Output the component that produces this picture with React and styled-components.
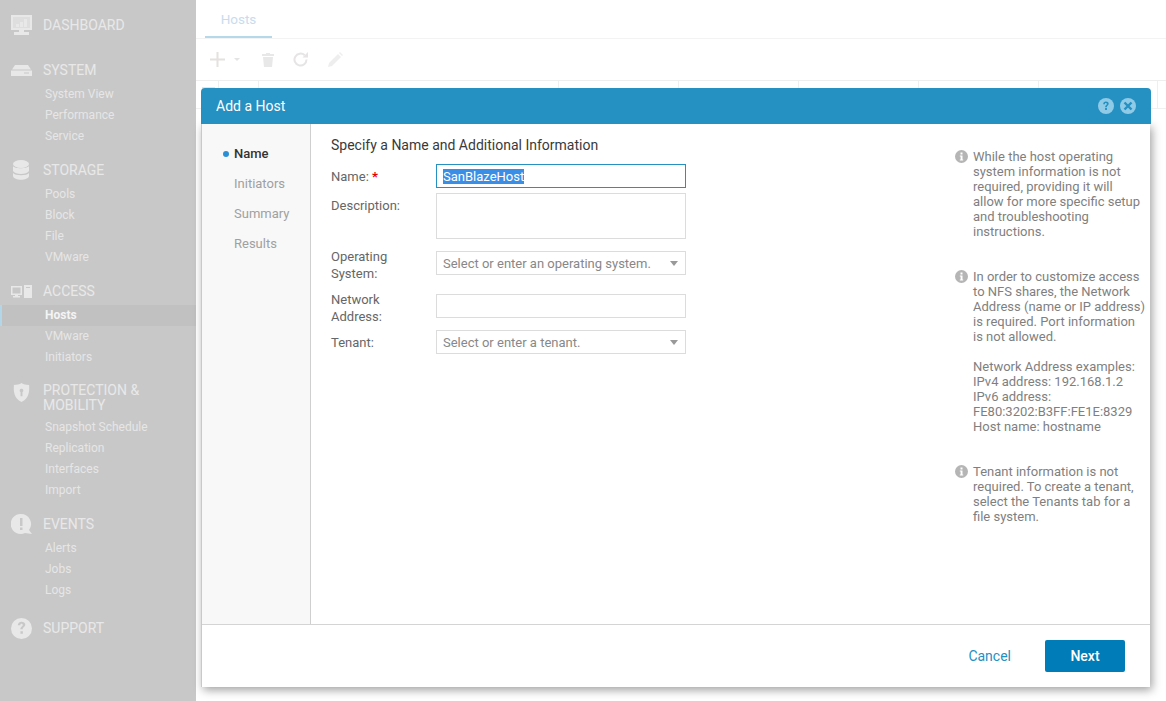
import React from 'react';
import styled, { createGlobalStyle } from 'styled-components';

const Global = createGlobalStyle`
  html, body { margin: 0; padding: 0; height: 100%; background: #fff; overflow: hidden; }
  body { font-family: Roboto, "Liberation Sans", sans-serif; }
`;
const Page = styled.div`display: flex; width: 1166px; height: 701px; position: relative; overflow: hidden;`;
const Sidebar = styled.nav`width: 196px; height: 701px; flex: none; background: #c8c8c8; padding-top: 17px; box-sizing: border-box;`;
const Section = styled.section`margin-bottom: ${p => p.$gap}px;`;
const SectionHead = styled.div`
  display: flex; align-items: ${p => p.$top ? 'flex-start' : 'center'}; height: ${p => p.$h || 16}px;
  margin-bottom: ${p => p.$mb ?? 6}px;
  color: #e8e8e8; font-size: 14px; line-height: 15px; text-transform: uppercase;
`;
const IconSlot = styled.span`width: 43px; padding-left: 11px; box-sizing: border-box; flex: none; display: flex; align-items: center; height: 22px; margin-top: ${p => p.$mt || 0}px;`;
const SubItem = styled.div`
  height: 21px; line-height: 21px; padding-left: ${p => p.$active ? 43 : 45}px; font-size: 12px;
  color: ${p => p.$active ? '#f4f4f4' : '#e6e6e6'}; font-weight: ${p => p.$active ? 700 : 400};
  ${p => p.$active && 'background:#c1c1c1;border-left:2px solid #b3d7e8;'}
`;
const Main = styled.main`flex: 1; min-width: 0;`;
const TabBar = styled.div`height: 38px; padding-left: 9px; border-bottom: 1px solid #f3f3f3;`;
const Tab = styled.div`width: 67px; height: 38px; box-sizing: border-box; text-align: center; line-height: 39px; font-size: 13.5px; color: #c9dcee; border-bottom: 2px solid #b5d8ea;`;
const Toolbar = styled.div`height: 41px; display: flex; align-items: center; padding-left: 14px; border-bottom: 1px solid #eeeeee;`;
const ToolIcon = styled.span`display: flex; margin-left: ${p => p.$ml || 0}px;`;
const HeadRow = styled.div`display: grid; grid-template-columns: 23px 40px 300px 120px 120px 120px 120px 119px 1fr; height: 27px; border-bottom: 1px solid #f0f0f0;`;
const HeadCell = styled.div`border-right: 1px solid #efefef; padding: 6px 0 0 6px;`;
const CheckBox = styled.span`display: block; width: 11px; height: 11px; border: 1px solid #e4e4e4;`;

const Modal = styled.div`
  position: absolute; left: 201px; top: 88px; width: 950px; height: 599px; display: flex; flex-direction: column;
`;
const ModalHead = styled.header`height: 36px; flex: none; background: #2590c2; border-radius: 4px 4px 0 0; display: flex; align-items: center; justify-content: space-between; padding: 0 15px; color: #fff; font-size: 14px; position: relative; z-index: 1;`;
const HeadIcons = styled.div`display: flex; gap: 6px;`;
const Panel = styled.div`flex: 1; min-height: 0; margin-right: 1px; border-left: 1px solid #c9c9c9; background: #fff; display: flex; flex-direction: column; box-shadow: 2px 3px 9px rgba(0,0,0,.38);`;
const Body = styled.div`flex: 1; display: flex; min-height: 0;`;
const Steps = styled.ul`width: 109px; flex: none; margin: 0; padding: 15px 0 0 32px; box-sizing: border-box; background: #f8f8f8; border-right: 1px solid #cfcfcf; list-style: none;`;
const Step = styled.li`
  height: 30px; line-height: 30px; font-size: 13px; position: relative;
  color: ${p => p.$on ? '#333' : '#a0a0a0'}; font-weight: ${p => p.$on ? 500 : 400};
  ${p => p.$on && `&::before{content:"";position:absolute;left:-11px;top:12px;width:6px;height:6px;border-radius:50%;background:#2b8fd6;}`}
`;
const Content = styled.div`flex: 1; padding: 12px 0 0 20px; min-width: 0; display: flex;`;
const FormCol = styled.div`width: 355px; flex: none;`;
const Title = styled.h2`margin: 0 0 10px; font-size: 14px; line-height: 18px; font-weight: 400; color: #3a3a3a;`;
const Row = styled.div`display: flex; margin-bottom: ${p => p.$mb ?? 5}px;`;
const Label = styled.label`width: 105px; flex: none; font-size: 13px; line-height: 17px; color: #666; padding-top: ${p => p.$pt ?? 4}px;`;
const Star = styled.span`color: #e60000; font-weight: 700;`;
const Field = styled.div`
  width: 250px; height: ${p => p.$h || 24}px; box-sizing: border-box; border: 1px solid ${p => p.$focus ? '#2590c2' : '#dcdcdc'};
  margin-top: ${p => p.$mt || 0}px;
  display: flex; align-items: center; justify-content: space-between; padding: 0 7px 0 6px; font-size: 13px; color: #888; background: #fff;
`;
const Selected = styled.span`background: #3a8ee6; color: #fff; line-height: 15px;`;
const Caret = styled.span`width: 0; height: 0; border-left: 4.500px solid transparent; border-right: 4.500px solid transparent; border-top: 5px solid #999;`;
const HelpCol = styled.aside`margin-left: 269px; width: 195px; padding-top: 13px; box-sizing: border-box;`;
const HelpBlock = styled.div`display: flex; margin-bottom: ${p => p.$mb}px;`;
const HelpIcon = styled.span`width: 18px; flex: none; padding-top: 1px; display: flex; align-items: flex-start;`;
const HelpText = styled.p`margin: 0; font-size: 13px; line-height: 15px; color: #7f7f7f; white-space: nowrap;`;
const Footer = styled.footer`height: 63px; flex: none; box-sizing: border-box; border-top: 1px solid #d4d4d4; display: flex; align-items: center; justify-content: flex-end; padding: 0 25px 0 0;`;
const Cancel = styled.a`font-size: 14px; color: #2590c2; margin-right: 34px;`;
const NextBtn = styled.button`width: 80px; height: 32px; border: 0; border-radius: 2px; background: #007db8; color: #fff; font: 500 14px Roboto, sans-serif; padding: 0;`;

const c = '#e8e8e8';
const Dash = () => <svg width="21" height="20" viewBox="0 0 21 20"><path fill={c} fillRule="evenodd" d="M0 0h21v15H13v2h5v3H3v-3h5v-2H0zM2 2v11h17V2z"/><path fill="#dedede" d="M2 2h17v11H2z"/><path fill={c} d="M5 9h3v3H5zM9 7h3v5H9zM13 4h3v8h-3z"/></svg>;
const Sys = () => <svg width="21" height="11" viewBox="0 0 21 11"><path fill={c} fillRule="evenodd" d="M4 0h13l3 4.500H1zM0 5.500h21V11H0zM13 7.500v1h5v-1z"/></svg>;
const Stor = () => <svg width="16" height="20" viewBox="0 0 16 20" style={{ marginLeft: 2 }}><ellipse cx="8" cy="4" rx="8" ry="4" fill={c}/><path fill={c} d="M0 6c1 3 14 3 16 0v5c-2 4-14 4-16 0zM0 13c2 3 14 3 16 0v3c-1 5-15 5-16 0z"/></svg>;
const Acc = () => <svg width="21" height="13" viewBox="0 0 21 13"><path fill={c} fillRule="evenodd" d="M0 1h11v9H7v1h2v1.500H2V11h2v-1H0zM1.500 2.500v6h8v-6z"/><path fill={c} fillRule="evenodd" d="M13 0h8v13h-8zM15 2v1h4V2z"/></svg>;
const Shield = () => <svg width="17" height="19" viewBox="0 0 17 20" style={{ marginLeft: 2 }}><path fill={c} fillRule="evenodd" d="M8.500 0c2 1.500 5 2 8 2 .5 7 0 14-8 18C.5 16 0 9 .5 2c3 0 6-.5 8-2zM8.500 6a2 2 0 0 0-1 3.700V14h2V9.700a2 2 0 0 0-1-3.700z"/></svg>;
const Evt = () => <svg width="21" height="21" viewBox="0 0 21 21"><path fill={c} fillRule="evenodd" d="M10 0a10 10 0 0 1 8 16l3 4-7-1A10 10 0 1 1 10 0zM9 4v8h2.500V4zM9 13.500V16h2.500v-2.500z"/></svg>;
const Sup = () => <svg width="21" height="21" viewBox="0 0 20 20"><path fill={c} fillRule="evenodd" d="M10 0a10 10 0 1 1 0 20 10 10 0 0 1 0-20zM6.500 7h2.300c0-1 .5-1.500 1.200-1.500s1.200.4 1.200 1.100c0 1.400-2.300 1.500-2.300 4.200h2.200c0-1.900 2.500-2 2.500-4.500C13.600 4.500 12 3.500 10 3.500 8 3.500 6.500 5 6.500 7zM9 12.500V15h2.300v-2.500z"/></svg>;

const Info = () => <svg width="13" height="13" viewBox="0 0 13 13"><path fill="#b5b5b5" fillRule="evenodd" d="M6.500 0a6.500 6.500 0 1 1 0 13 6.500 6.500 0 0 1 0-13zM5.500 2.500v2h2v-2zM4.800 5.500v1h.8v3h-.8v1h3.400v-1h-.7v-4z"/></svg>;
const Help = () => <svg width="16" height="16" viewBox="0 0 16 16"><circle cx="8" cy="8" r="8" fill="#8fcbe6"/><path fill="#2590c2" d="M5.200 6.200h1.700c0-.8.400-1.100 1-1.100s1 .3 1 .9c0 1-1.800 1.200-1.800 3.200h1.700c0-1.400 1.900-1.600 1.900-3.400 0-1.500-1.200-2.200-2.800-2.200-1.600 0-2.700 1-2.700 2.600zM7.100 10v1.900h1.800V10z"/></svg>;
const Close = () => <svg width="16" height="16" viewBox="0 0 16 16"><circle cx="8" cy="8" r="8" fill="#8fcbe6"/><path stroke="#2590c2" strokeWidth="2.400" d="M4.500 4.500l7 7M11.500 4.500l-7 7"/></svg>;

const App = () => (
  <Page>
    <Global />
    <Sidebar>
      <Section $gap={29}><SectionHead $mb={0}><IconSlot><Dash /></IconSlot>Dashboard</SectionHead></Section>
      <Section $gap={15}>
        <SectionHead><IconSlot><Sys /></IconSlot>System</SectionHead>
        <SubItem>System View</SubItem><SubItem>Performance</SubItem><SubItem>Service</SubItem>
      </Section>
      <Section $gap={15}>
        <SectionHead><IconSlot><Stor /></IconSlot>Storage</SectionHead>
        <SubItem>Pools</SubItem><SubItem>Block</SubItem><SubItem>File</SubItem><SubItem>VMware</SubItem>
      </Section>
      <Section $gap={15}>
        <SectionHead><IconSlot><Acc /></IconSlot>Access</SectionHead>
        <SubItem $active>Hosts</SubItem><SubItem>VMware</SubItem><SubItem>Initiators</SubItem>
      </Section>
      <Section $gap={15}>
        <SectionHead $top $h={30} $mb={4}><IconSlot $mt={-2}><Shield /></IconSlot><span>Protection &amp;<br />Mobility</span></SectionHead>
        <SubItem>Snapshot Schedule</SubItem><SubItem>Replication</SubItem><SubItem>Interfaces</SubItem><SubItem>Import</SubItem>
      </Section>
      <Section $gap={19}>
        <SectionHead><IconSlot><Evt /></IconSlot>Events</SectionHead>
        <SubItem>Alerts</SubItem><SubItem>Jobs</SubItem><SubItem>Logs</SubItem>
      </Section>
      <Section $gap={0}><SectionHead $mb={0}><IconSlot><Sup /></IconSlot>Support</SectionHead></Section>
    </Sidebar>
    <Main>
      <TabBar><Tab>Hosts</Tab></TabBar>
      <Toolbar>
        <ToolIcon><svg width="15" height="15" viewBox="0 0 15 15"><path stroke="#e6e0e0" strokeWidth="2" d="M7.500 0v15M0 7.500h15"/></svg></ToolIcon>
        <ToolIcon $ml={9}><svg width="6" height="4" viewBox="0 0 6 4"><path fill="#e4e4e4" d="M0 0h6L3 3z"/></svg></ToolIcon>
        <ToolIcon $ml={22}><svg width="12" height="14" viewBox="0 0 12 14"><path fill="#e8e8e8" d="M4 0h4v1h4v2H0V1h4zM1 4h10l-1 10H2z"/></svg></ToolIcon>
        <ToolIcon $ml={19}><svg width="15" height="15" viewBox="0 0 15 15"><path fill="none" stroke="#e6e4e4" strokeWidth="2" d="M13.500 7.500A6 6 0 1 1 11.700 3.300"/><path fill="#e6e4e4" d="M9.500 5.500H15V0z"/></svg></ToolIcon>
        <ToolIcon $ml={20}><svg width="15" height="15" viewBox="0 0 15 15"><path fill="#eeeeee" d="M0 15l1-4 9-9 3 3-9 9zM11 1l1-1 3 3-1 1z"/></svg></ToolIcon>
      </Toolbar>
      <HeadRow>
        <HeadCell><CheckBox /></HeadCell>
        {Array.from({ length: 7 }, (_, i) => <HeadCell key={i} />)}
      </HeadRow>
    </Main>
    <Modal>
      <ModalHead>Add a Host<HeadIcons><Help /><Close /></HeadIcons></ModalHead>
      <Panel>
        <Body>
          <Steps>
            <Step $on>Name</Step><Step>Initiators</Step><Step>Summary</Step><Step>Results</Step>
          </Steps>
          <Content>
            <FormCol>
              <Title>Specify a Name and Additional Information</Title>
              <Row><Label>Name: <Star>*</Star></Label><Field $focus><Selected>SanBlazeHost</Selected></Field></Row>
              <Row $mb={9}><Label>Description:</Label><Field $h={46} /></Row>
              <Row $mb={9}><Label $pt={0}>Operating<br />System:</Label><Field $mt={3}>Select or enter an operating system.<Caret /></Field></Row>
              <Row $mb={5}><Label $pt={0}>Network<br />Address:</Label><Field $mt={3} /></Row>
              <Row><Label>Tenant:</Label><Field>Select or enter a tenant.<Caret /></Field></Row>
            </FormCol>
            <HelpCol>
              <HelpBlock $mb={30}><HelpIcon><Info /></HelpIcon><HelpText>While the host operating<br />system information is not<br />required, providing it will<br />allow for more specific setup<br />and troubleshooting<br />instructions.</HelpText></HelpBlock>
              <HelpBlock $mb={30}><HelpIcon><Info /></HelpIcon><HelpText>In order to customize access<br />to NFS shares, the Network<br />Address (name or IP address)<br />is required. Port information<br />is not allowed.<br /><br />Network Address examples:<br />IPv4 address: 192.168.1.2<br />IPv6 address:<br />FE80:3202:B3FF:FE1E:8329<br />Host name: hostname</HelpText></HelpBlock>
              <HelpBlock $mb={0}><HelpIcon><Info /></HelpIcon><HelpText>Tenant information is not<br />required. To create a tenant,<br />select the Tenants tab for a<br />file system.</HelpText></HelpBlock>
            </HelpCol>
          </Content>
        </Body>
        <Footer><Cancel>Cancel</Cancel><NextBtn>Next</NextBtn></Footer>
      </Panel>
    </Modal>
  </Page>
);
export default App;
